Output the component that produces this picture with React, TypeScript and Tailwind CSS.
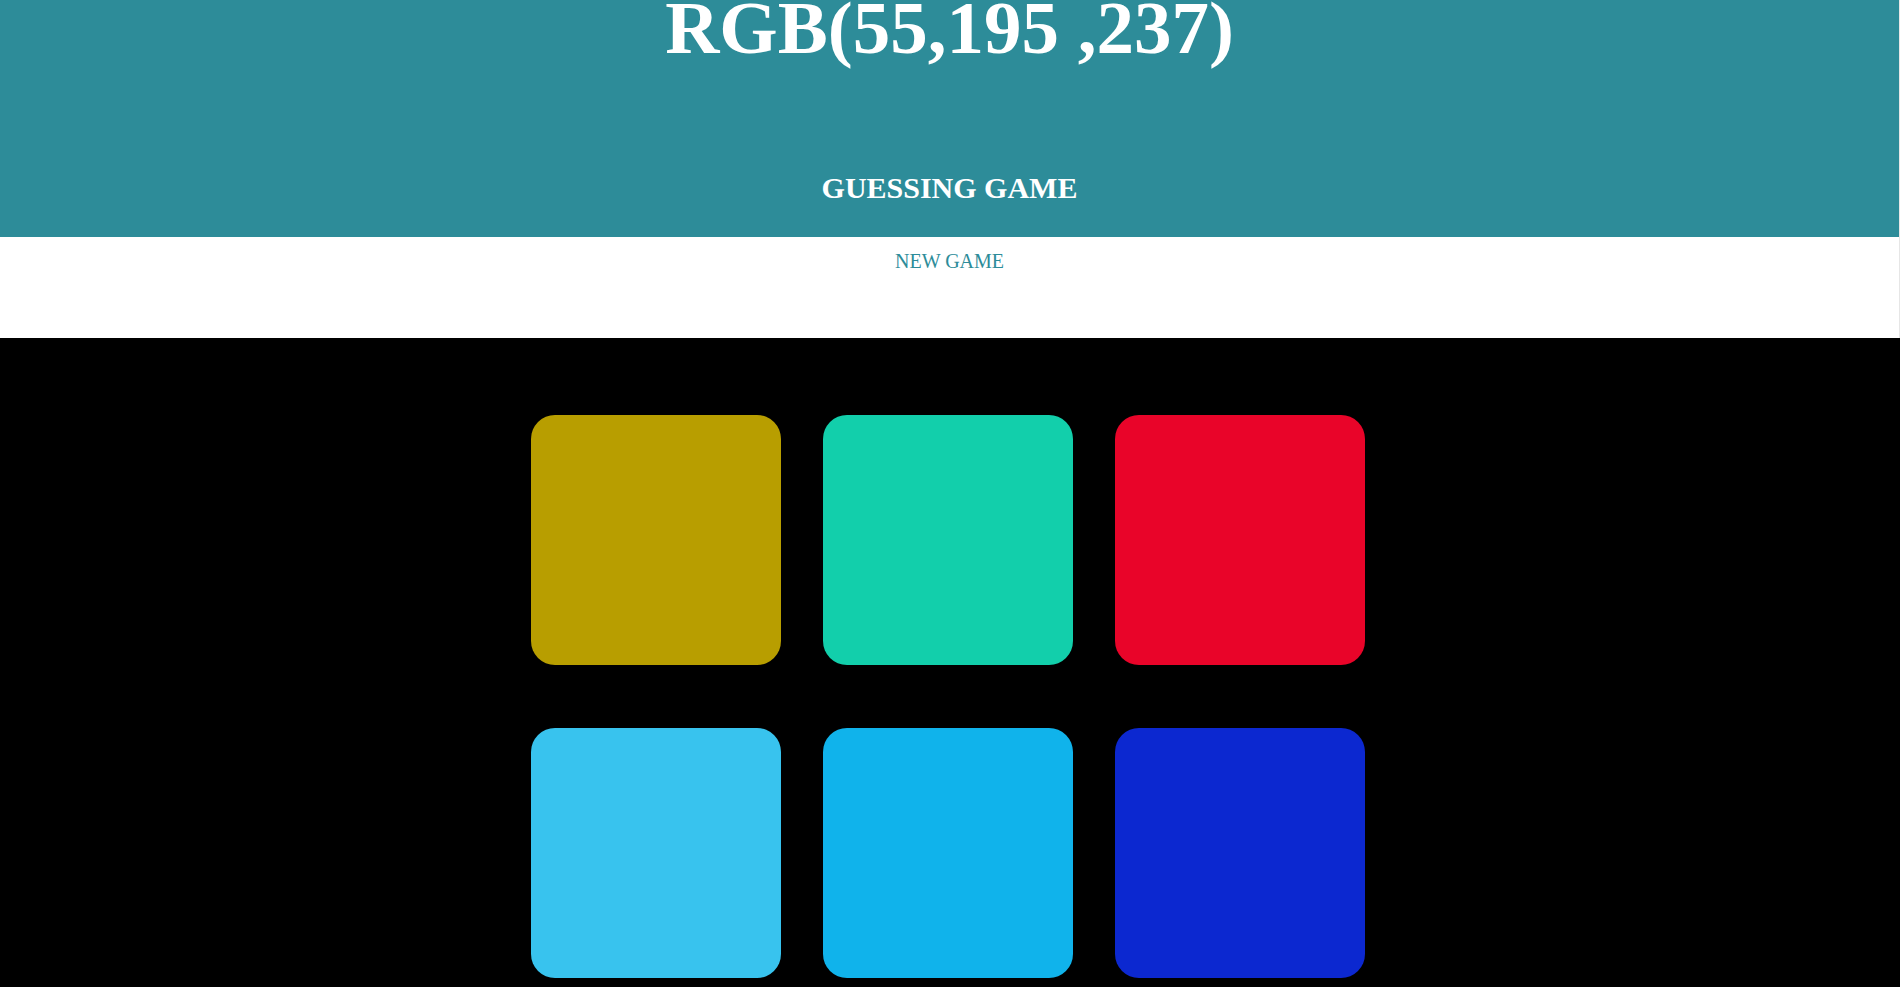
const colors = [
  "#b89e00",
  "#12cfab",
  "#e90429",
  "#38c3ee",
  "#10b3eb",
  "#0c28d0",
];

export default function App() {
  return (
    <div className="min-h-screen bg-black font-['Liberation_Serif',_'Times_New_Roman',_serif]">
      <div className="border-r border-[#e6e6e6]">
        <header className="h-[237px] bg-[#2d8c99] text-white flex flex-col items-center">
          <h1 className="text-[75px] leading-[55px] font-bold">RGB(55,195 ,237)</h1>
          <h2 className="mt-[118px] text-[30px] leading-[30px] font-bold">GUESSING GAME</h2>
        </header>
        <div className="h-[101px] bg-white flex justify-center pt-[14px]">
          <button className="h-5 text-[20px] leading-[20px] text-[#2d8c99] uppercase">New Game</button>
        </div>
      </div>

      <div className="flex justify-center pt-[77px] pb-[9px]">
        <div className="grid grid-cols-[repeat(3,250px)] gap-x-[42px] gap-y-[63px] pr-[4px]">
          {colors.map((c) => (
            <div key={c} className="w-[250px] h-[250px] rounded-3xl" style={{ backgroundColor: c }} />
          ))}
        </div>
      </div>
    </div>
  );
}
